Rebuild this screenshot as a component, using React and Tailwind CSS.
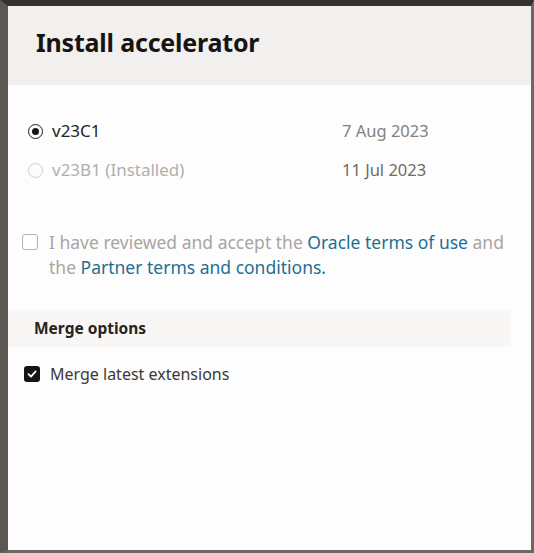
import React from 'react';

const font = { fontFamily: '"Noto Sans", "Open Sans", sans-serif' };

const App = () => {
  return (
    <div
      className="w-[534px] h-[553px] flex flex-col bg-[#fdfdfd] border-t-[6px] border-l-[8px] border-r-[3px] border-b-[3px] border-t-[#34322f] border-l-[#5b5752] border-r-[#6c6761] border-b-[#6c6761] overflow-hidden"
      style={font}
    >
      <div className="h-[79px] bg-[#f1f0ef] flex items-center pl-[28px] pb-[6px]">
        <h1 className="text-[25px] font-bold text-[#161513] tracking-[-0.2px]">Install accelerator</h1>
      </div>

      <div className="pt-[36px] pl-[20px] flex flex-col gap-[19px]">
        <div className="flex items-center h-[20px]">
          <span className="w-[15px] h-[15px] rounded-full border-[1.5px] border-[#1d1c1b] flex items-center justify-center">
            <span className="w-[7px] h-[7px] rounded-full bg-[#161513]" />
          </span>
          <span className="ml-[9px] w-[290px] text-[17px] text-[#262422]">v23C1</span>
          <span className="text-[16.5px] text-[#85817d]">7 Aug 2023</span>
        </div>
        <div className="flex items-center h-[20px]">
          <span className="w-[15px] h-[15px] rounded-full border border-[#cfcdca]" />
          <span className="ml-[9px] w-[290px] text-[17px] text-[#b2afac]">v23B1 (Installed)</span>
          <span className="text-[16.5px] text-[#6f6a66]">11 Jul 2023</span>
        </div>
      </div>

      <div className="mt-[50px] pl-[14px] flex items-start">
        <span className="mt-[4px] w-[16px] h-[16px] shrink-0 rounded-[3px] border-[1.5px] border-[#b6b3b0] bg-white" />
        <div className="ml-[11px] w-[462px] text-[17.5px] leading-[25px] text-[#a8a5a2]">
          <div>
            <span>I have reviewed and accept the </span>
            <a className="text-[#1f6f91]">Oracle terms of use</a>
            <span> and</span>
          </div>
          <div>
            <span>the </span>
            <a className="text-[#1f6f91]">Partner terms and conditions.</a>
          </div>
        </div>
      </div>

      <div className="mt-[30px] mr-[20px] h-[37px] bg-[#f8f7f6] flex items-center pl-[26px]">
        <span className="text-[15.5px] font-bold text-[#262422]">Merge options</span>
      </div>

      <div className="mt-[15px] pl-[16px] flex items-center">
        <span className="w-[16px] h-[16px] rounded-[3px] bg-[#161513] flex items-center justify-center">
          <svg width="10" height="10" viewBox="0 0 10 10" fill="none">
            <path d="M1.5 5.2 L4 7.6 L8.6 2.4" stroke="#fff" strokeWidth="1.8" strokeLinecap="round" strokeLinejoin="round" />
          </svg>
        </span>
        <span className="ml-[10px] text-[16px] text-[#3b3936]">Merge latest extensions</span>
      </div>
    </div>
  );
};

export default App;
